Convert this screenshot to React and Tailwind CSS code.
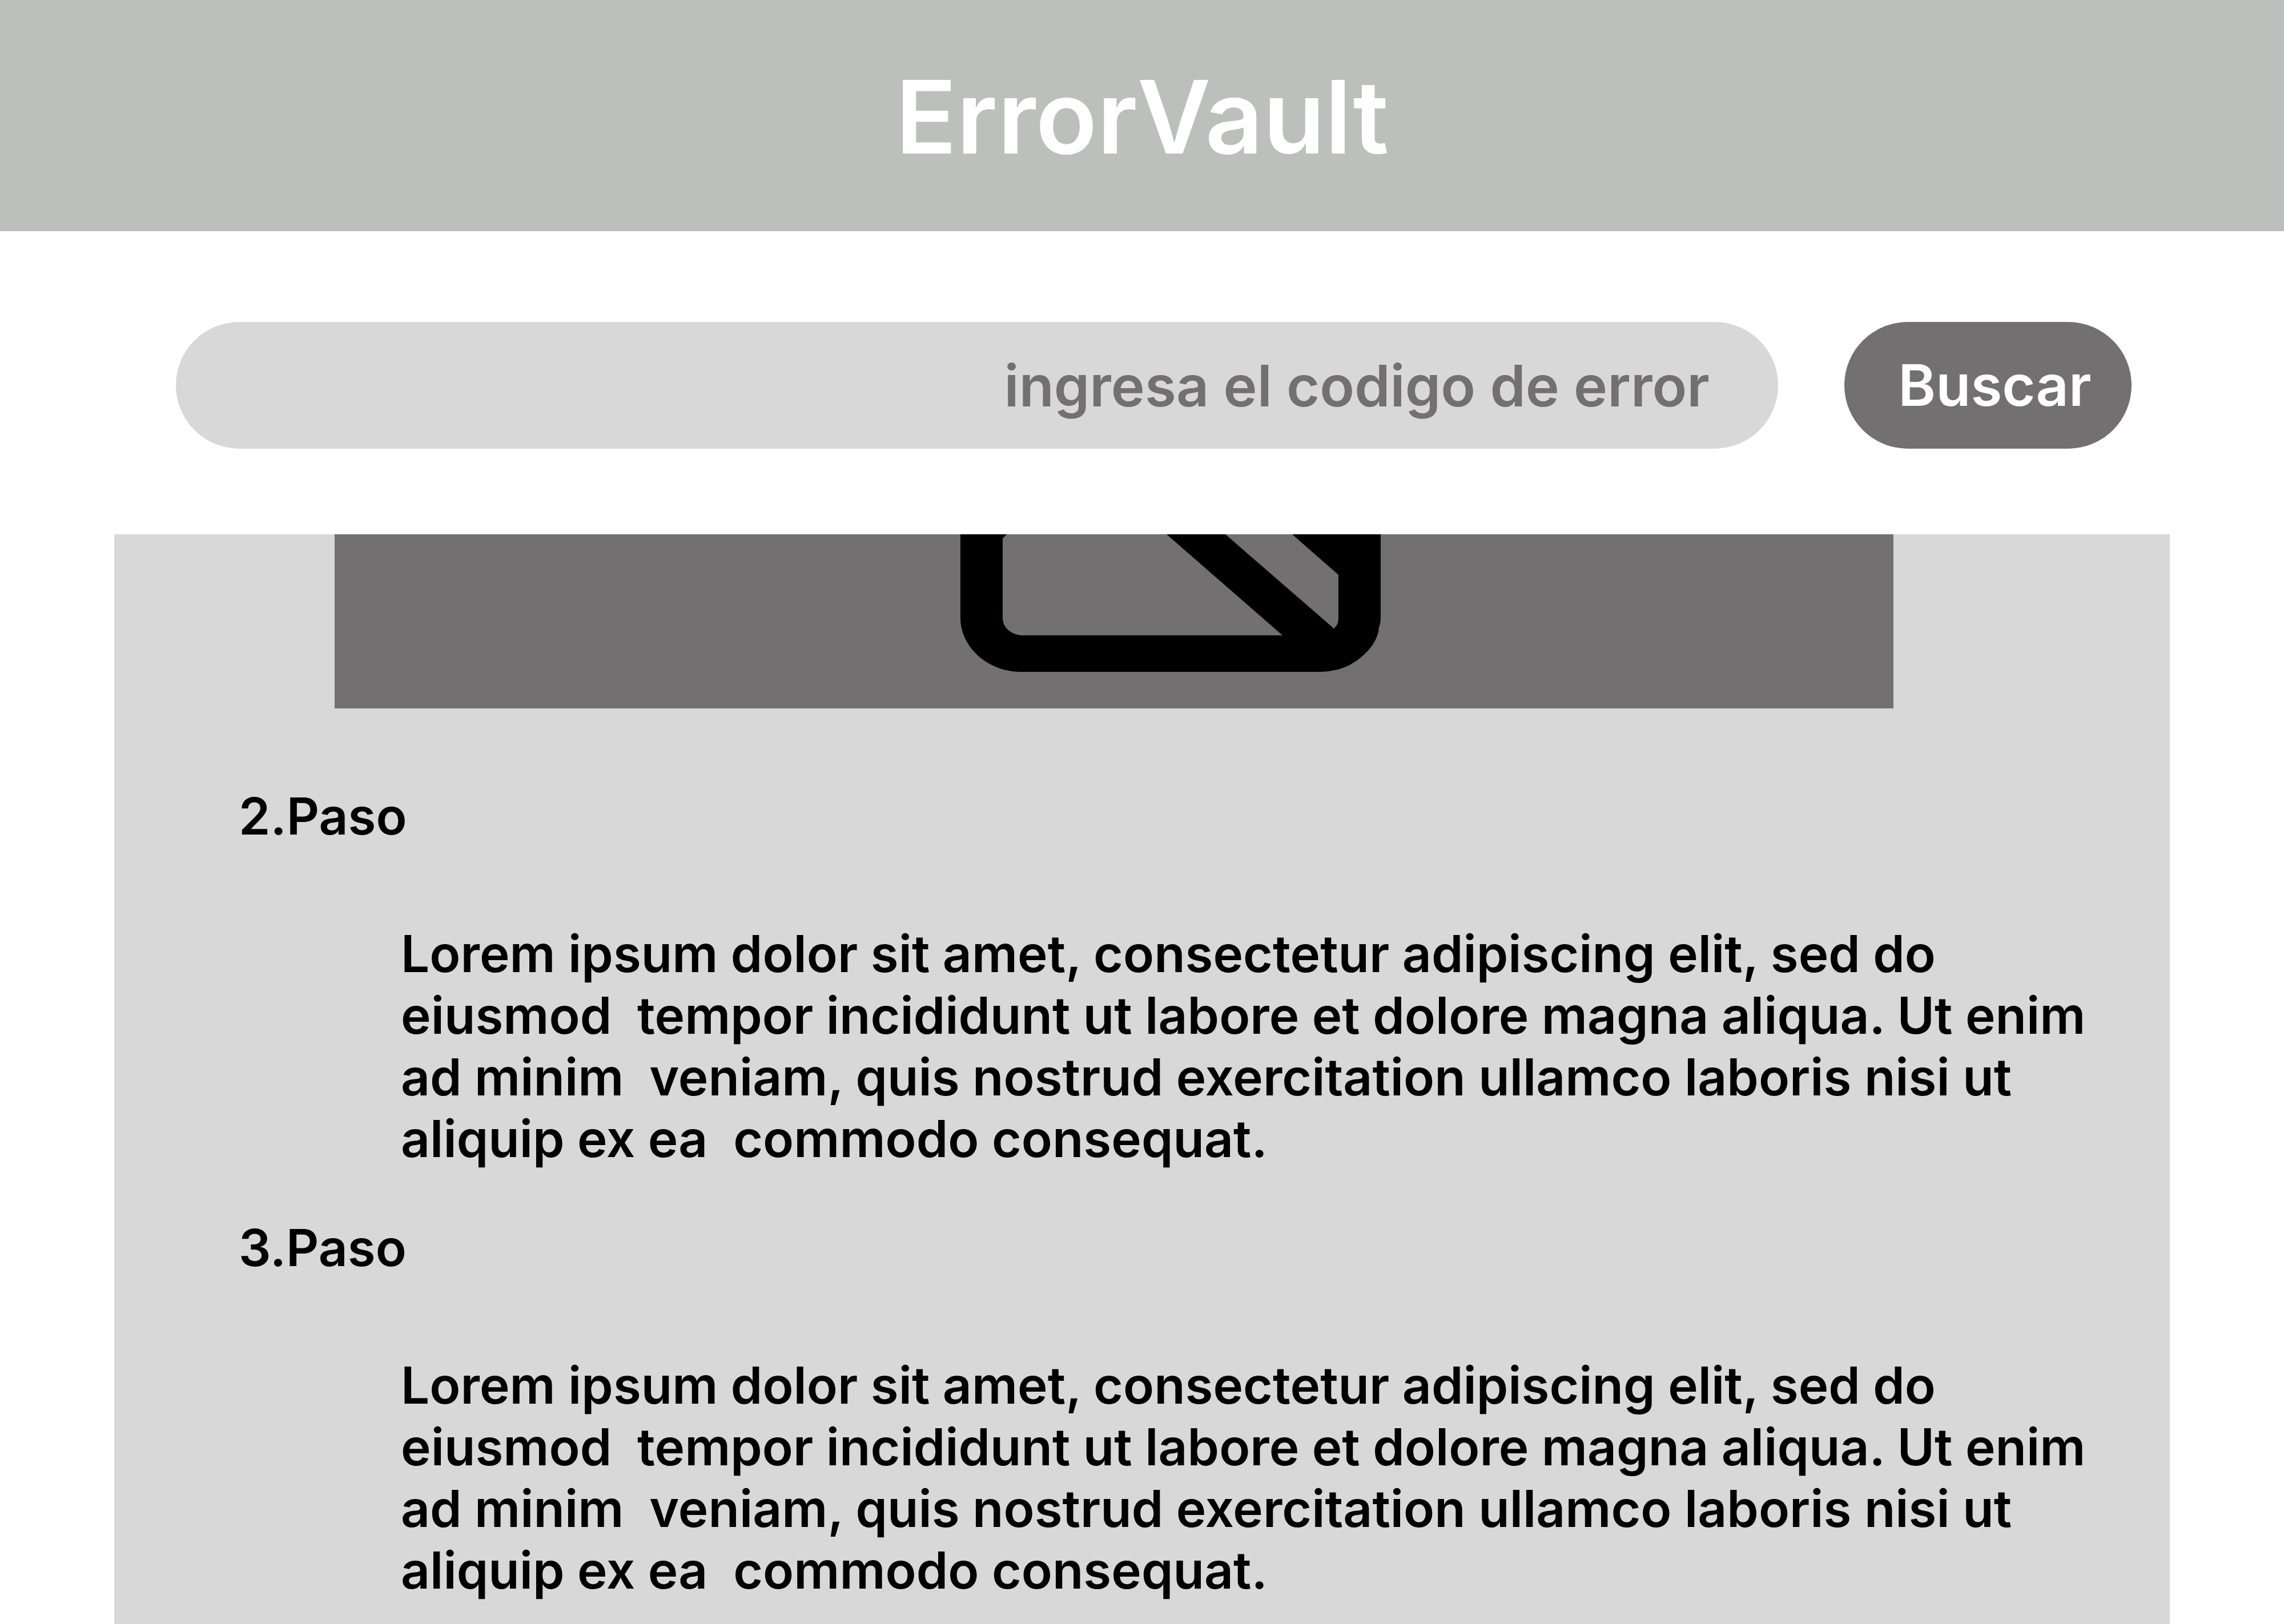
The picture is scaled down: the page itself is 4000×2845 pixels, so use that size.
const LOREM =
  "Lorem ipsum dolor sit amet, consectetur adipiscing elit, sed do eiusmod  tempor incididunt ut labore et dolore magna aliqua. Ut enim ad minim  veniam, quis nostrud exercitation ullamco laboris nisi ut aliquip ex ea  commodo consequat.";

const steps = [
  { title: "2.Paso", text: LOREM },
  { title: "3.Paso", text: LOREM },
];

function ImagePlaceholder() {
  return (
    <div className="mr-[484px] ml-[386px] flex h-[305px] justify-center bg-[#727071] pl-[198px]">
      <svg
        viewBox="0 0 736 305"
        className="h-[305px] w-[736px]"
        role="img"
        aria-label="Imagen"
      >
        <path
          fillRule="evenodd"
          d="M0 0H736V146C736 152 735 158 733 163L732 171C728 188 716 204 701 216C690 225 676 233 661 237L655 238C647 240 638 241 630 241H107C48 241 0 198 0 146ZM81 0L74 7V146C74 164 90 177 110 177H564L361 0ZM464 0L654 165C660 160 662 154 662 146V71L581 0Z"
        />
      </svg>
    </div>
  );
}

function Step({ title, text }) {
  return (
    <section className="flex flex-col gap-[133px] text-[89px] leading-[108px] text-black">
      <h2 className="pl-[218px]">{title}</h2>
      <p className="mr-[130px] ml-[502px] whitespace-pre-wrap">{text}</p>
    </section>
  );
}

export default function App() {
  return (
    <div className="flex min-h-screen flex-col bg-white pb-px font-['Inter',sans-serif] font-semibold">
      <header className="flex h-[405px] justify-center bg-[#bcc0bc] pt-[97px]">
        <h1 className="h-[216px] text-[177px] leading-[216px] text-white">ErrorVault</h1>
      </header>

      <form
        className="mt-[159px] mr-[267px] ml-[308px] flex gap-[116px]"
        onSubmit={(e) => e.preventDefault()}
      >
        <input
          type="text"
          aria-label="Codigo de error"
          placeholder="ingresa el codigo de error"
          className="h-[222px] min-w-0 flex-1 rounded-full bg-[#d8d8d8] px-[120px] text-right text-[100px] text-[#727071] outline-none placeholder:text-[#727071]"
        />
        <button
          type="submit"
          className="h-[222px] w-[503px] rounded-full bg-[#727071] pl-[24px] text-[100px] text-white"
        >
          Buscar
        </button>
      </form>

      <main className="mx-[200px] mt-[150px] flex-1 bg-[#d8d8d8] pb-[40px]">
        <ImagePlaceholder />
        <div className="mt-[135px] flex flex-col gap-[83px]">
          {steps.map((step) => (
            <Step key={step.title} title={step.title} text={step.text} />
          ))}
        </div>
      </main>
    </div>
  );
}
